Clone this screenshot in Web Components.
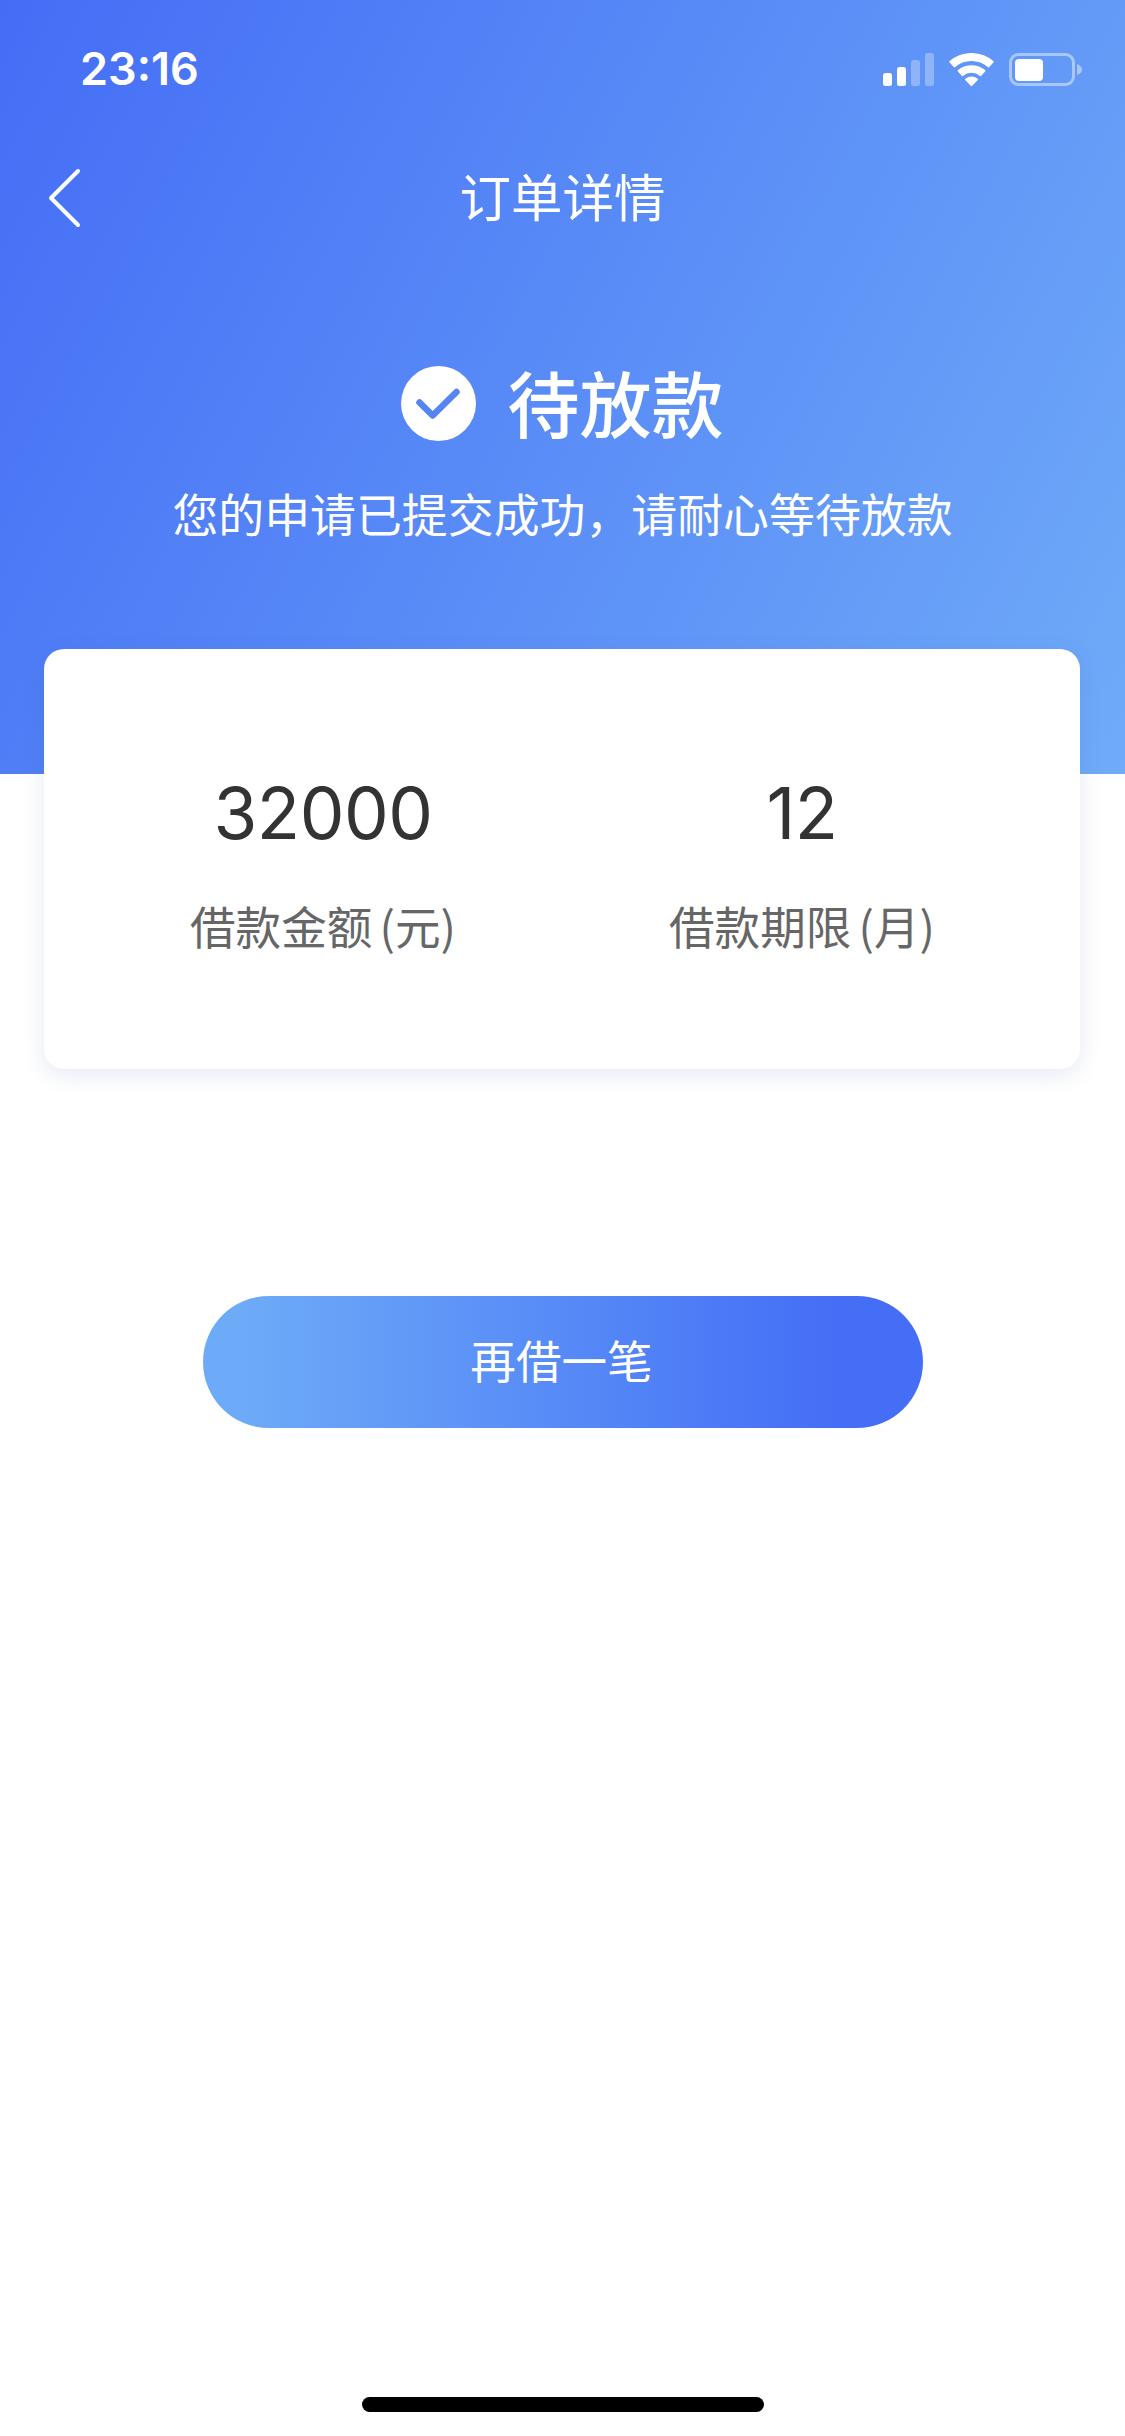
<!DOCTYPE html>
<html lang="zh-CN">
<head>
<meta charset="utf-8">
<title>订单详情</title>
<style>
  html, body { margin: 0; padding: 0; background: #fff; }
  body { font-family: "Noto Sans CJK SC", "Liberation Sans", sans-serif; }
</style>
</head>
<body>
<order-page>
  <order-hero slot="hero" heading="订单详情" status="待放款" message="您的申请已提交成功&#65292;请耐心等待放款"></order-hero>
  <loan-card slot="card">
    <loan-stat value="32000" label="借款金额 (元)"></loan-stat>
    <loan-stat value="12" label="借款期限 (月)"></loan-stat>
  </loan-card>
  <action-button slot="action">再借一笔</action-button>
</order-page>

<script>
/**
 * Page frame
 */
class OrderPage extends HTMLElement {
  constructor() {
    super();
    this.attachShadow({ mode: 'open' });
  }

  connectedCallback() {
    this.shadowRoot.innerHTML = `
      <style>
        :host { display: flex; flex-direction: column; min-height: 2436px; background: #fff; }
        .card { display: block; padding: 0 45px 0 44px; margin-top: -125.5px; }
        .action { display: flex; justify-content: center; margin-top: 227px; }
        .bottom { margin-top: auto; display: flex; justify-content: center; padding-bottom: 24px; }
        .bar { width: 402px; height: 15px; border-radius: 8px; background: #000; }
      </style>
      <slot name="hero"></slot>
      <div class="card"><slot name="card"></slot></div>
      <div class="action"><slot name="action"></slot></div>
      <div class="bottom"><div class="bar"></div></div>
    `;
  }
}

/**
 * Status bar
 */
class StatusBar extends HTMLElement {
  constructor() {
    super();
    this.attachShadow({ mode: 'open' });
  }

  connectedCallback() {
    this.shadowRoot.innerHTML = `
      <style>
        :host { display: flex; align-items: center; justify-content: space-between; height: 138px; padding: 0 43px 0 80px; }
        .time { font: 600 45px/60px Inter, "Liberation Sans", sans-serif; color: #fff; }
        .icons { display: flex; align-items: center; gap: 15px; }
        svg { display: block; }
      </style>
      <span class="time">23:16</span>
      <div class="icons">
        <svg width="51" height="33" viewBox="0 0 51 33">
          <rect x="0" y="20" width="9" height="13" rx="2.5" fill="#fff"/>
          <rect x="14" y="14" width="9" height="19" rx="2.5" fill="#fff"/>
          <rect x="28" y="7" width="9" height="26" rx="2.5" fill="#fff" fill-opacity=".3"/>
          <rect x="42" y="0" width="9" height="33" rx="2.5" fill="#fff" fill-opacity=".3"/>
        </svg>
        <svg width="45" height="33" viewBox="0 0 45 33" fill="#fff" stroke="#fff" stroke-width="1.5" stroke-linejoin="round">
          <path d="M1 8.7A33 33 0 0 1 44 8.7L39.5 13.7A26 26 0 0 0 5.5 13.7Z"/>
          <path d="M9.2 17.8A20.5 20.5 0 0 1 35.8 17.8L31.5 22.4A14 14 0 0 0 13.5 22.4Z"/>
          <path d="M16.8 26.4A9 9 0 0 1 28.2 26.4L22.5 32.4Z"/>
        </svg>
        <svg width="73" height="33" viewBox="0 0 73 33">
          <rect x="1.5" y="1.5" width="63" height="30" rx="8" fill="none" stroke="#fff" stroke-opacity=".45" stroke-width="3"/>
          <rect x="6" y="6" width="28" height="22" rx="4" fill="#fff"/>
          <path d="M68 11C71 12 73 14 73 16.5S71 21 68 22Z" fill="#fff" fill-opacity=".45"/>
        </svg>
      </div>
    `;
  }
}

/**
 * Blue header with nav and order status
 */
class OrderHero extends HTMLElement {
  constructor() {
    super();
    this.attachShadow({ mode: 'open' });
  }

  connectedCallback() {
    const heading = this.getAttribute('heading') || '';
    const status = this.getAttribute('status') || '';
    const message = this.getAttribute('message') || '';

    this.shadowRoot.innerHTML = `
      <style>
        :host {
          display: block; height: 774px; color: #fff;
          background: linear-gradient(118deg, #446df6 0%, #6fabf8 100%);
        }
        .nav { position: relative; display: flex; justify-content: center; align-items: center; box-sizing: border-box; height: 120px; padding-bottom: 6px; }
        .back { position: absolute; left: 48px; top: 30px; display: block; }
        .heading { font-size: 51.5px; line-height: 70px; }
        .status { display: flex; justify-content: center; align-items: center; gap: 31px; margin-top: 100px; height: 90px; }
        .status span { font-size: 72px; line-height: 90px; font-weight: 500; margin-bottom: 5px; }
        .message { margin-top: 34px; text-align: center; font-size: 45.9px; line-height: 60px; white-space: nowrap; }
        svg { display: block; }
      </style>
      <status-bar></status-bar>
      <div class="nav">
        <svg class="back" width="33" height="60" viewBox="0 0 33 60" fill="none" stroke="#fff" stroke-width="4" stroke-linecap="round" stroke-linejoin="round">
          <path d="M30 3 L3 30 L30 57"/>
        </svg>
        <span class="heading">${heading}</span>
      </div>
      <div class="status">
        <svg width="75" height="75" viewBox="0 0 75 75">
          <circle cx="37.5" cy="37.5" r="37.5" fill="#fff"/>
          <path d="M18.5 36.5 L31.7 49.5 L55.5 26" fill="none" stroke="#5585f5" stroke-width="6.5" stroke-linecap="round" stroke-linejoin="round"/>
        </svg>
        <span>${status}</span>
      </div>
      <div class="message">${message}</div>
    `;
  }
}

/**
 * White card that holds the loan figures
 */
class LoanCard extends HTMLElement {
  constructor() {
    super();
    this.attachShadow({ mode: 'open' });
  }

  connectedCallback() {
    this.shadowRoot.innerHTML = `
      <style>
        :host {
          display: flex; justify-content: space-between; box-sizing: border-box;
          height: 420.5px; padding: 118px 145px 0 146px;
          background: #fff; border-radius: 20px;
          box-shadow: 0 6px 22px rgba(70, 90, 170, 0.13);
        }
      </style>
      <slot></slot>
    `;
  }
}

class LoanStat extends HTMLElement {
  constructor() {
    super();
    this.attachShadow({ mode: 'open' });
  }

  connectedCallback() {
    this.shadowRoot.innerHTML = `
      <style>
        :host { display: block; text-align: center; }
        .value { font: 400 71px/90px Inter, "Liberation Sans", sans-serif; letter-spacing: -0.5px; color: #333; padding-top: 1px; }
        .label { margin-top: 37px; font-size: 45.6px; line-height: 60px; color: #666; white-space: nowrap; word-spacing: -3px; }
      </style>
      <div class="value">${this.getAttribute('value')}</div>
      <div class="label">${this.getAttribute('label')}</div>
    `;
  }
}

/**
 * Gradient pill button
 */
class ActionButton extends HTMLElement {
  constructor() {
    super();
    this.attachShadow({ mode: 'open' });
  }

  connectedCallback() {
    this.shadowRoot.innerHTML = `
      <style>
        :host {
          display: flex; justify-content: center; align-items: center; box-sizing: border-box;
          width: 720px; height: 132px; padding: 0 2px 6px 0; border-radius: 66px;
          background: linear-gradient(90deg, #6dabf8 5%, #446ef6 88%);
          color: #fff; font-size: 45.6px;
        }
      </style>
      <slot></slot>
    `;
  }
}

customElements.define('order-page', OrderPage);
customElements.define('status-bar', StatusBar);
customElements.define('order-hero', OrderHero);
customElements.define('loan-card', LoanCard);
customElements.define('loan-stat', LoanStat);
customElements.define('action-button', ActionButton);
</script>
</body>
</html>
